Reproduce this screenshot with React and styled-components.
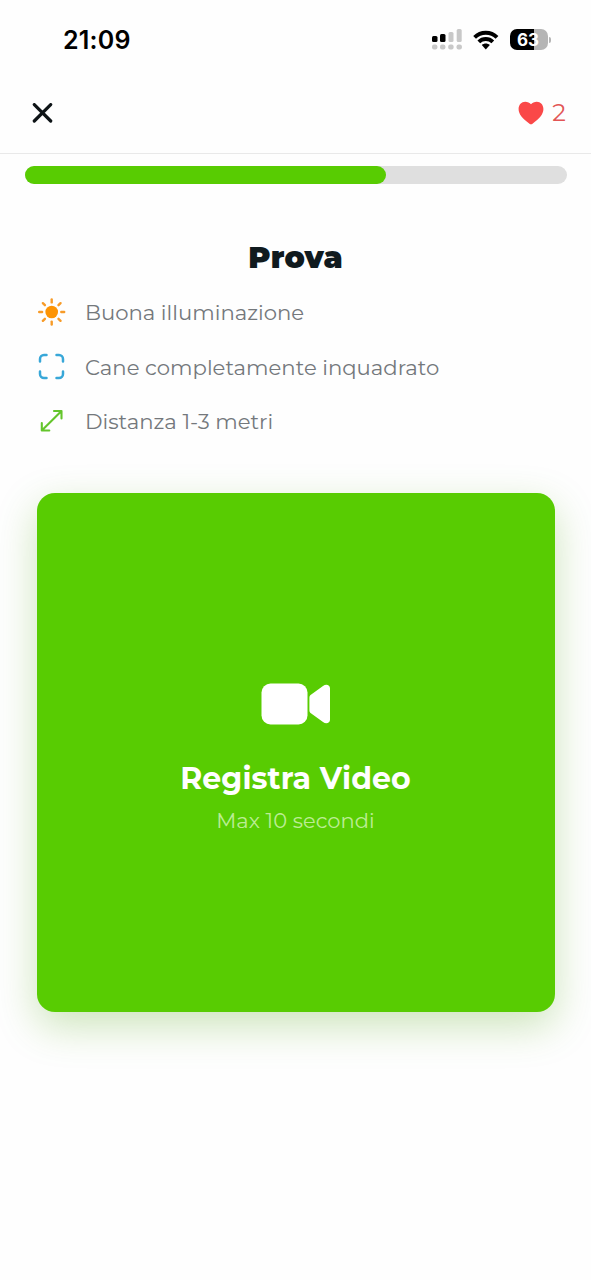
import React from 'react';
import styled, { createGlobalStyle } from 'styled-components';

const GlobalStyle = createGlobalStyle`
  * {
    box-sizing: border-box;
  }

  body {
    margin: 0;
    background: #fefefe;
    font-family: Montserrat, Inter, 'Liberation Sans', sans-serif;
    -webkit-font-smoothing: antialiased;
  }

  svg {
    display: block;
    flex: none;
  }
`;

const Screen = styled.div`
  min-height: 1280px;
  display: flex;
  flex-direction: column;
  background: #fefefe;
`;

const StatusBar = styled.div`
  height: 72px;
  padding: 6px 40.5px 0 63px;
  display: flex;
  align-items: flex-start;
  justify-content: space-between;
`;

const Time = styled.span`
  font-family: Inter, 'Liberation Sans', sans-serif;
  font-size: 25px;
  font-weight: 600;
  line-height: 68px;
  letter-spacing: 0.2px;
  color: #000;
`;

const StatusIcons = styled.div`
  height: 67px;
  display: flex;
  align-items: center;
  gap: 11px;
`;

const Battery = styled.div`
  display: flex;
  align-items: center;
  gap: 1px;
`;

const BatteryBody = styled.div`
  width: 38px;
  height: 21px;
  padding-right: 1px;
  border-radius: 7px;
  background: linear-gradient(to right, #000 0 ${props => props.$level}%, #b5b5b5 ${props => props.$level}% 100%);
  color: #fff;
  font-family: Inter, 'Liberation Sans', sans-serif;
  font-size: 17px;
  font-weight: 700;
  line-height: 22px;
  text-align: center;
`;

const BatteryTip = styled.div`
  width: 2px;
  height: 6px;
  border-radius: 0 2px 2px 0;
  background: #b5b5b5;
`;

const Header = styled.header`
  height: 82px;
  padding: 0 25px 0 32px;
  display: flex;
  align-items: center;
  justify-content: space-between;
  border-bottom: 1px solid #e9e9e9;
`;

const CloseButton = styled.button`
  padding: 0;
  border: none;
  background: none;
  cursor: pointer;
`;

const Lives = styled.div`
  display: flex;
  align-items: center;
  gap: 8px;
`;

const LivesCount = styled.span`
  padding-top: 1px;
  font-size: 24px;
  font-weight: 400;
  line-height: 30px;
  color: #e25555;
`;

const ProgressTrack = styled.div`
  height: 18px;
  margin: 12px 24.5px 0;
  border-radius: 9px;
  background: #dfdfdf;
`;

const ProgressFill = styled.div`
  width: ${props => props.$value}%;
  height: 100%;
  border-radius: 9px;
  background: #58cc02;
`;

const Title = styled.h1`
  margin: 54px 0 0;
  font-size: 30px;
  font-weight: 900;
  line-height: 40px;
  letter-spacing: 0.2px;
  text-align: center;
  color: #101a1e;
`;

const TipList = styled.ul`
  margin: 7px 0 0;
  padding: 0 37px;
  list-style: none;
`;

const Tip = styled.li`
  height: 54.6px;
  display: flex;
  align-items: center;
  gap: 19px;
`;

const TipText = styled.span`
  font-size: 21.2px;
  font-weight: 400;
  line-height: 28px;
  white-space: nowrap;
  color: #74787c;
`;

const RecordCard = styled.button`
  width: 518px;
  height: 519px;
  margin: 44px auto 0;
  padding: 13px 0 0;
  border: none;
  border-radius: 18px;
  display: flex;
  flex-direction: column;
  align-items: center;
  justify-content: center;
  background: #58cc02;
  box-shadow: 0 14px 40px rgba(76, 160, 10, 0.28);
  font-family: inherit;
  cursor: pointer;
`;

const RecordTitle = styled.span`
  margin-top: 34px;
  font-size: 30px;
  font-weight: 700;
  line-height: 40px;
  letter-spacing: 0.1px;
  color: #fff;
`;

const RecordHint = styled.span`
  margin-top: 8px;
  font-size: 21px;
  font-weight: 400;
  line-height: 28px;
  letter-spacing: 0.05px;
  color: #bcec95;
`;

const SignalIcon = () => (
  <svg width="30" height="22" viewBox="0 0 30 22">
    <rect x="0" y="7" width="5.5" height="6" rx="1.5" fill="#000" />
    <rect x="8" y="5" width="5.5" height="8" rx="1.5" fill="#000" />
    <rect x="16.5" y="3" width="5" height="10" rx="1.5" fill="#c8c8c8" />
    <rect x="24.7" y="0" width="5" height="13" rx="1.5" fill="#c8c8c8" />
    {[0, 8, 16.2, 24.5].map(x => (
      <rect key={x} x={x} y="15.5" width="5.4" height="5" rx="2" fill="#c8c8c8" />
    ))}
  </svg>
);

const WifiIcon = () => (
  <svg width="26" height="20" viewBox="0 0 26 20">
    <g fill="none" stroke="#000" strokeWidth="3.9">
      <path d="M1.6 7.4C7.8 1.1 17.8 1.1 24 7.4" />
      <path d="M5.8 11.8c3.9-3.8 10.1-3.8 14 0" />
    </g>
    <path d="M8.8 15c2.3-2 5.7-2 8 0l-4 4.4z" fill="#000" />
  </svg>
);

const CloseIcon = () => (
  <svg width="21" height="20" viewBox="0 0 21 20">
    <path d="M2.3 1.6 18.7 18M18.7 1.6 2.3 18" fill="none" stroke="#0e1417" strokeWidth="3.2" strokeLinecap="round" />
  </svg>
);

const HeartIcon = () => (
  <svg width="26" height="24" viewBox="0 0 26 24">
    <path
      d="M13 23.3c-.6 0-1-.3-1.5-.6C4.6 17.9.6 13.4.6 8.1.6 3.7 3.5.7 7.2.7c2.4 0 4.5 1 5.8 2.5C14.3 1.7 16.4.7 18.8.7c3.7 0 6.6 3 6.6 7.4 0 5.3-4 9.8-10.9 14.6-.5.3-.9.6-1.5.6z"
      fill="#fa4848"
    />
  </svg>
);

const SunIcon = () => (
  <svg width="29" height="28" viewBox="0 0 29 28">
    <circle cx="14.7" cy="14" r="6.3" fill="#fd9404" />
    {[0, 45, 90, 135, 180, 225, 270, 315].map(angle => (
      <path
        key={angle}
        d="M14.7 1.5v2.9"
        transform={`rotate(${angle} 14.7 14)`}
        stroke="#f79b28"
        strokeWidth="2.4"
        strokeLinecap="round"
      />
    ))}
  </svg>
);

const FrameIcon = () => (
  <svg width="29" height="28" viewBox="0 0 29 28">
    <path
      d="M3 8.5V6a4 4 0 0 1 4-4h2.5M19.5 2H22a4 4 0 0 1 4 4v2.5M26 18.5V21a4 4 0 0 1-4 4h-2.5M9.5 25H7a4 4 0 0 1-4-4v-2.5"
      fill="none"
      stroke="#38a7d8"
      strokeWidth="2.5"
      strokeLinecap="round"
    />
  </svg>
);

const ExpandIcon = () => (
  <svg width="29" height="28" viewBox="0 0 29 28">
    <path
      d="M4.8 23.5 24.5 4M17 4h7.5v7.5M4.8 16v7.5h7.5"
      fill="none"
      stroke="#64c52c"
      strokeWidth="2.1"
      strokeLinecap="round"
      strokeLinejoin="round"
    />
  </svg>
);

const VideoIcon = () => (
  <svg width="70" height="42" viewBox="0 0 70 42">
    <rect x="0.5" y="0.5" width="46" height="41" rx="9" fill="#fff" />
    <path d="M48.4 14.7c0-1.3.5-2.2 1.5-3L62 3c3-2.3 7-1.2 7 2.3v31.4c0 3.5-4 4.6-7 2.3L49.9 30.3c-1-.8-1.5-1.7-1.5-3z" fill="#fff" />
  </svg>
);

const tips = [
  { icon: <SunIcon />, text: 'Buona illuminazione' },
  { icon: <FrameIcon />, text: 'Cane completamente inquadrato' },
  { icon: <ExpandIcon />, text: 'Distanza 1-3 metri' },
];

const App = () => {
  return (
    <>
      <GlobalStyle />
      <Screen>
        <StatusBar>
          <Time>21:09</Time>
          <StatusIcons>
            <SignalIcon />
            <WifiIcon />
            <Battery>
              <BatteryBody $level={63}>63</BatteryBody>
              <BatteryTip />
            </Battery>
          </StatusIcons>
        </StatusBar>
        <Header>
          <CloseButton aria-label="Chiudi">
            <CloseIcon />
          </CloseButton>
          <Lives>
            <HeartIcon />
            <LivesCount>2</LivesCount>
          </Lives>
        </Header>
        <ProgressTrack>
          <ProgressFill $value={66.66} />
        </ProgressTrack>
        <Title>Prova</Title>
        <TipList>
          {tips.map(tip => (
            <Tip key={tip.text}>
              {tip.icon}
              <TipText>{tip.text}</TipText>
            </Tip>
          ))}
        </TipList>
        <RecordCard>
          <VideoIcon />
          <RecordTitle>Registra Video</RecordTitle>
          <RecordHint>Max 10 secondi</RecordHint>
        </RecordCard>
      </Screen>
    </>
  );
};

export default App;
